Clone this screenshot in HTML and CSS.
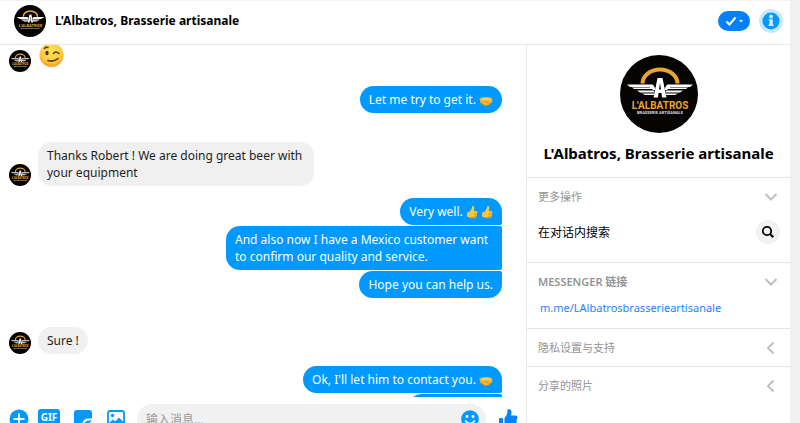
FILE: index.html
```html
<!DOCTYPE html>
<html lang="zh-CN">
<head>
<meta charset="utf-8">
<meta name="viewport" content="width=device-width, initial-scale=1">
<title>Messenger</title>
<link rel="stylesheet" href="styles.css">
</head>
<body>
<svg class="defs" aria-hidden="true">
  <symbol id="brand" viewBox="0 0 78 78">
    <circle cx="39" cy="39" r="39" fill="#050403"/>
    <path d="M22.500 28.500A17.500 14 0 0 1 57.500 28.500" fill="none" stroke="#e9a52f" stroke-width="4"/>
    <path d="M7 29.500H33L35 33V35H33L32 34H14L12 32.500H30V32H10ZM17 35.500H34V37.500H20ZM22 38.500H34V40H25ZM73 29.500H47L45 33V35H47L48 34H66L68 32.500H50V32H70ZM63 35.500H46V37.500H60ZM58 38.500H46V40H55Z" fill="#fff"/>
    <path fill-rule="evenodd" d="M37.500 23H42.500L46.500 42.500H42L41.500 38H38.500L38 42.500H33.500ZM40 28L39 34.500H41Z" fill="#fff"/>
    <text class="brand-name" x="40" y="53.500" text-anchor="middle">L'ALBATROS</text>
    <text class="brand-sub" x="40" y="58.500" text-anchor="middle">BRASSERIE ARTISANALE</text>
  </symbol>
  <symbol id="shake" viewBox="0 0 14 12">
    <path d="M.5 3.500 3 2.500 6 3.500 8 2.500 11 2.500 13.500 4 12.800 7.500 9.500 10.300Q7.500 11.700 5.500 10.600L1.500 8Z" fill="#f5b52c"/>
    <path d="M3 3Q7 1.500 11 3L12.500 5Q9 6 7 5Q4.500 6.500 3 5Z" fill="#ffd057"/>
    <path d="M2 7.800 5.500 10.400Q7.500 11.300 9.500 10L12.500 7.500M6 5.500 9.500 8" fill="none" stroke="#c9801c" stroke-width=".8"/>
  </symbol>
  <symbol id="thumb-emoji" viewBox="0 0 12 14">
    <path d="M6.300 1Q8.500.600 8.300 3L7.800 6H10.500Q11.500 6 11.300 7.500L10.500 11.500Q10.200 12.800 9 12.800H4.500L1 11.500 1.200 7.500 4 6.500Q6 4 6.300 1Z" fill="#ffc637"/>
    <path d="M7.500 8H11M7.300 9.800H10.700M7 11.500H10.300M2 12 4.500 12.900H9" fill="none" stroke="#d99320" stroke-width=".7"/>
  </symbol>
  <symbol id="down" viewBox="0 0 14 14"><path d="M1.500 4 7 9.500 12.500 4" fill="none" stroke="#bcc0c4" stroke-width="2"/></symbol>
  <symbol id="left" viewBox="0 0 14 14"><path d="M9.500 1.500 4 7 9.500 12.500" fill="none" stroke="#bcc0c4" stroke-width="2"/></symbol>
</svg>
<div class="app">
  <header class="topbar">
    <svg class="avatar-md" role="img" aria-label="L'Albatros"><use href="#brand"/></svg>
    <h1 class="topbar-title">L'Albatros, Brasserie artisanale</h1>
    <button class="done" aria-label="完成">
      <svg viewBox="0 0 32 20" width="32" height="20"><path d="M8.500 10.500 11.500 13.500 17.500 6.500" fill="none" stroke="#fff" stroke-width="2"/><path d="M21 9H25L23 11.500Z" fill="#fff"/></svg>
    </button>
    <button class="info" aria-label="信息">
      <svg viewBox="0 0 24 24" width="24" height="24"><circle cx="12" cy="12" r="8.500" fill="#0099ff"/><circle cx="12" cy="7.500" r="1.900" fill="#d6ecff"/><path d="M9.800 10.300H13.800V15.500H14.500V17H9.600V15.500H10.500V11.800H9.800Z" fill="#d6ecff"/></svg>
    </button>
  </header>
  <div class="body">
    <main class="chat">
      <div class="messages">
        <div class="group received first">
          <svg class="avatar-sm" aria-hidden="true"><use href="#brand"/></svg>
          <svg class="wink" viewBox="0 0 26 26" role="img" aria-label="眨眼">
            <defs><radialGradient id="face" cx=".5" cy=".35" r=".7"><stop offset="0" stop-color="#ffe65c"/><stop offset=".65" stop-color="#ffc83b"/><stop offset="1" stop-color="#f28a22"/></radialGradient></defs>
            <circle cx="13.500" cy="13" r="12" fill="url(#face)"/>
            <ellipse cx="9" cy="11" rx="1.700" ry="2.300" fill="#4b3520"/>
            <path d="M15.500 11.500Q17.500 8.500 21 11.500M6.500 6.500Q8 4.800 10 5.500M10 18.500Q15.500 20.500 20 16.500" fill="none" stroke="#563b1c" stroke-width="1.600" stroke-linecap="round"/>
          </svg>
        </div>
        <div class="group sent second"><p class="bubble">Let me try to get it. <svg class="shake" role="img" aria-label="握手"><use href="#shake"/></svg></p></div>
        <div class="group received third">
          <svg class="avatar-sm" aria-hidden="true"><use href="#brand"/></svg>
          <p class="bubble">Thanks Robert ! We are doing great beer with your equipment</p>
        </div>
        <div class="group sent follow">
          <p class="bubble joined-down">Very well. <svg class="thumb" role="img" aria-label="赞"><use href="#thumb-emoji"/></svg> <svg class="thumb" role="img" aria-label="赞"><use href="#thumb-emoji"/></svg></p>
          <p class="bubble joined-down joined-up">And also now I have a Mexico customer want to confirm our quality and service.</p>
          <p class="bubble joined-up">Hope you can help us.</p>
        </div>
        <div class="group received third">
          <svg class="avatar-sm" aria-hidden="true"><use href="#brand"/></svg>
          <p class="bubble">Sure !</p>
        </div>
        <div class="group sent follow">
          <p class="bubble joined-down">Ok, I'll let him to contact you. <svg class="shake" role="img" aria-label="握手"><use href="#shake"/></svg></p>
          <p class="bubble joined-up next"></p>
        </div>
      </div>
      <form class="composer">
        <div class="tools">
          <button type="button" class="tool" aria-label="更多"><svg viewBox="0 0 20 20" width="20" height="20"><circle cx="10" cy="10" r="9.500" fill="#0099ff"/><path d="M10 4.500V15.500M4.500 10H15.500" stroke="#fff" stroke-width="1.800"/></svg></button>
          <button type="button" class="tool gif">GIF</button>
          <button type="button" class="tool" aria-label="贴图"><svg viewBox="0 0 20 20" width="20" height="20"><path d="M4 1H16Q19 1 19 4V9.500H16Q9.500 9.500 9.500 15V19H4Q1 19 1 16V4Q1 1 4 1ZM19 11.500 11.500 18.500V16Q11.500 11.500 16 11.500Z" fill="#0099ff"/></svg></button>
          <button type="button" class="tool" aria-label="图片"><svg viewBox="0 0 20 20" width="20" height="20"><rect x="2" y="2" width="16" height="16" rx="2" fill="none" stroke="#0099ff" stroke-width="1.800"/><circle cx="6.500" cy="6.500" r="1.700" fill="#0099ff"/><path d="M3 14 7 10.500 9 12.500 13 8.500 17.500 13V17H3Z" fill="#0099ff"/></svg></button>
        </div>
        <div class="field">
          <input type="text" class="input" aria-label="输入消息" placeholder="输入消息...">
          <button type="button" class="tool smile" aria-label="表情"><svg viewBox="0 0 20 20" width="20" height="20"><circle cx="10" cy="10" r="8.800" fill="#0099ff"/><circle cx="7" cy="7.500" r="1.400" fill="#fff"/><circle cx="13" cy="7.500" r="1.400" fill="#fff"/><path d="M5 11.500Q10 17.500 15 11.500" fill="none" stroke="#fff" stroke-width="1.600"/></svg></button>
        </div>
        <button type="button" class="tool like" aria-label="赞"><svg viewBox="0 0 20 20" width="20" height="20"><path d="M6.500 9Q9.300 6.500 9.300 3.500V1.500Q9.500 0 11 0Q13.800.500 13.500 3.500L13 6.500H17.500Q19.500 6.500 19.500 8.500 19.500 10 18.500 10.500 19.300 13 18 14 18.500 16 17 17 17 19 15 19H10L6.500 18ZM2 9H4Q5 9 5 10V18Q5 19 4 19H2Q1 19 1 18V10Q1 9 2 9Z" fill="#0084ff"/></svg></button>
      </form>
    </main>
    <aside class="side">
      <section class="profile">
        <svg class="avatar-lg" role="img" aria-label="L'Albatros"><use href="#brand"/></svg>
        <h2 class="profile-name">L'Albatros, Brasserie artisanale</h2>
      </section>
      <section class="panel more">
        <button class="panel-head">更多操作<svg class="chev"><use href="#down"/></svg></button>
        <div class="action"><label for="find">在对话内搜索</label>
          <button id="find" class="find"><svg viewBox="0 0 24 24" width="24" height="24"><circle cx="11" cy="11" r="4.200" fill="none" stroke="#000" stroke-width="1.800"/><path d="M14 14 17.300 17.300" stroke="#000" stroke-width="2.200"/></svg></button>
        </div>
      </section>
      <section class="panel link">
        <button class="panel-head strong">MESSENGER 链接<svg class="chev"><use href="#down"/></svg></button>
        <a class="mlink" href="#">m.me/LAlbatrosbrasserieartisanale</a>
      </section>
      <section class="panel"><button class="panel-head">隐私设置与支持<svg class="chev"><use href="#left"/></svg></button></section>
      <section class="panel"><button class="panel-head">分享的照片<svg class="chev"><use href="#left"/></svg></button></section>
    </aside>
  </div>
</div>
</body>
</html>
```
FILE: styles.css
```css
* { box-sizing: border-box; }
body {
  margin: 0;
  height: 100vh;
  overflow: hidden;
  background: #f0f0f0;
  font-family: "Noto Sans", "Noto Sans CJK SC", sans-serif;
  font-size: 12px;
  line-height: 17px;
  color: #1c1e21;
}
button { border: 0; padding: 0; background: none; font: inherit; color: inherit; }
h1, h2, p { margin: 0; }
svg { display: block; flex: none; }
.defs { position: absolute; width: 0; height: 0; }
.brand-name { font: 700 10px "Roboto", sans-serif; fill: #e9a52f; }
.brand-sub { font: 700 4px "Roboto", sans-serif; fill: #ddd; }

.app {
  display: flex;
  flex-direction: column;
  height: 100%;
  margin-right: 10px;
  background: #fff;
}
.topbar {
  display: flex;
  align-items: center;
  flex: none;
  height: 45px;
  padding: 0 7px 4px 14px;
  border-top: 1px solid #f4f4f4;
  border-bottom: 1px solid #e9e9e9;
}
.avatar-md { width: 32px; height: 32px; }
.avatar-sm { width: 22px; height: 22px; }
.avatar-lg { width: 78px; height: 78px; }
.topbar-title { flex: 1; margin-left: 9px; font-size: 12px; font-weight: 700; color: #000; }
.done { border-radius: 10px; background: #0080ff; }
.info { margin-left: 9px; border-radius: 50%; background: #c9e8ff; }

.body { display: flex; flex: 1; min-height: 0; }
.chat { display: flex; flex: 1; flex-direction: column; min-width: 0; }
.messages { flex: 1; min-height: 0; overflow: hidden; padding: 0 24px 0 9px; }
.group { display: flex; }
.received { align-items: flex-end; gap: 7px; }
.received .bubble { background: #f1f0f0; }
.sent { flex-direction: column; align-items: flex-end; gap: 1px; }
.sent .bubble { background: #0099ff; color: #fff; }
.first { align-items: flex-start; padding-top: 5px; }
.second { margin-top: 14px; }
.third { margin-top: 29px; }
.follow { margin-top: 12px; }
.wink { width: 26px; height: 26px; margin-top: -8px; }
.bubble { max-width: 276px; padding: 5px 9px; border-radius: 14px; }
.joined-down { border-bottom-right-radius: 2px; }
.joined-up { border-top-right-radius: 2px; }
.next { width: 94px; min-height: 27px; }
.shake, .thumb { display: inline-block; vertical-align: -3px; }
.shake { width: 14px; height: 12px; }
.thumb { width: 12px; height: 14px; }

.composer { display: flex; flex: none; height: 26px; padding: 7px 8px 0 9px; overflow: hidden; }
.tools { display: flex; gap: 13px; flex: none; }
.tool { display: flex; flex: none; justify-content: center; width: 20px; height: 20px; margin-top: 5px; }
.gif {
  width: 22px;
  margin-left: -4px;
  border-radius: 3px;
  background: #0099ff;
  color: #fff;
  font-size: 10px;
  font-weight: 700;
}
.field { display: flex; flex: 1; height: 30px; min-width: 0; margin: 0 12px 0 11px; border-radius: 15px; background: #f1f1f1; }
.input { flex: 1; min-width: 0; height: 30px; padding: 0 9px; border: 0; outline: 0; background: none; font: inherit; }
.input::placeholder { color: #999; }
.smile { margin-right: 6px; }

.side { width: 264px; flex: none; border-left: 1px solid #e9e9e9; }
.profile { display: flex; flex-direction: column; align-items: center; height: 132px; padding-top: 10px; }
.profile-name { margin-top: 10px; font-size: 15px; line-height: 20px; color: #000; white-space: nowrap; }
.panel { padding: 0 11px; border-top: 1px solid #e5e5e5; }
.panel-head { display: flex; align-items: center; justify-content: space-between; width: 100%; height: 37px; color: #949494; font-size: 11px; }
.strong { font-weight: 600; }
.chev { width: 14px; height: 14px; margin-right: 1px; }
.more { height: 85px; }
.action { display: flex; align-items: center; justify-content: space-between; margin: 5px -1px 0 0; color: #000; }
.find { border-radius: 50%; background: #f2f2f2; }
.link { height: 66px; }
.mlink { display: block; padding-left: 2px; font-size: 11px; line-height: 16px; color: #1a84ff; text-decoration: none; }
```
